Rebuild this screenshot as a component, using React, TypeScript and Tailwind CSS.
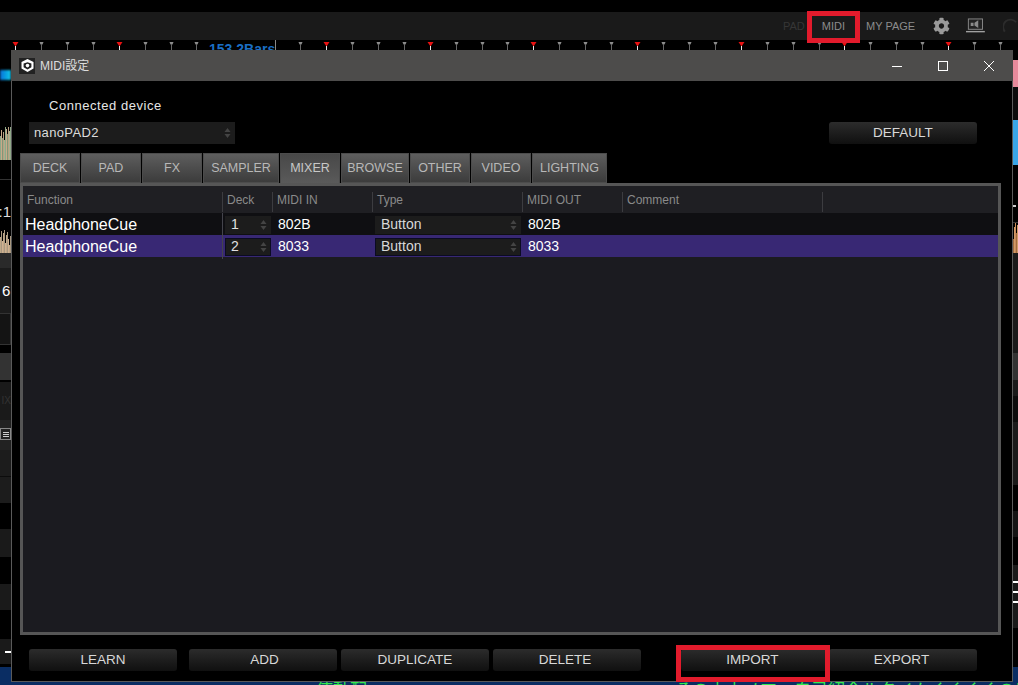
import React from "react";
import { FaCog } from "react-icons/fa";

const markers = Array.from({ length: 40 }, (_, i) => 15 + i * 25.92);

function Arrows({ color = "#444" }: { color?: string }) {
  return (
    <svg width="7" height="12" viewBox="0 0 7 12" className="shrink-0">
      <path d="M3.5 1 L6.5 5 L0.5 5 Z" fill={color} />
      <path d="M3.5 11 L6.5 7 L0.5 7 Z" fill={color} />
    </svg>
  );
}

function Ruler() {
  return (
    <svg width="1018" height="10" viewBox="0 0 1018 10" className="block">
      {markers.map((x, i) => {
        if (i >= 8 && i <= 10) return null;
        const px = Math.round(x) + 0.5;
        const red = i % 4 === 0;
        return red ? (
          <g key={i}>
            <path d={`M${px - 3} 2 L${px + 3} 2 L${px} 6.5 Z`} fill="#e81212" />
            <line x1={px} x2={px} y1="6" y2="10" stroke="#e8e8e8" />
          </g>
        ) : (
          <g key={i}>
            <path d={`M${px - 2} 2 L${px + 2} 2 L${px + 1} 4.5 L${px - 1} 4.5 Z`} fill="#8c8c8c" />
            <line x1={px} x2={px} y1="4" y2="10" stroke="#666" />
          </g>
        );
      })}
    </svg>
  );
}

function Wave({ bars, height, colors }: { bars: number[]; height: number; colors: string[] }) {
  return (
    <svg width={bars.length} height={height} viewBox={`0 0 ${bars.length} ${height}`} className="block">
      {bars.map((b, i) => (
        <rect key={i} x={i} y={height - b} width="1" height={b} fill={colors[i % colors.length]} />
      ))}
    </svg>
  );
}

function Logo() {
  return (
    <div className="w-4 h-4 bg-[#222] flex items-center justify-center shrink-0">
      <svg width="15" height="15" viewBox="0 0 15 15">
        <path d="M7.5 1 L13.5 4 V10.5 L7.5 14 L1.5 10.5 V4 Z" fill="#fff" />
        <path d="M3.6 5.6 L7.5 4.2 L11.4 5.6 V9.2 L7.5 11.6 L3.6 9.2 Z" fill="#222" />
        <circle cx="7.5" cy="7.6" r="1.8" fill="#fff" />
      </svg>
    </div>
  );
}

function DarkButton({ label, className }: { label: string; className: string }) {
  return (
    <div
      className={
        "h-[22px] rounded-[3px] bg-gradient-to-b from-[#2c2c2c] to-[#101010] flex items-center justify-center text-[13.5px] text-[#d8d8d8] " +
        className
      }
    >
      {label}
    </div>
  );
}

const tabs = [
  { label: "DECK", w: "w-[60px]" },
  { label: "PAD", w: "w-[60px]" },
  { label: "FX", w: "w-[60px]" },
  { label: "SAMPLER", w: "w-[76px]" },
  { label: "MIXER", w: "w-[60px]", active: true },
  { label: "BROWSE", w: "w-[68px]" },
  { label: "OTHER", w: "w-[60px]" },
  { label: "VIDEO", w: "w-[60px]" },
  { label: "LIGHTING", w: "w-[75px]" },
];

const rowGrid = "grid grid-cols-[200px_50px_100px_150px_100px_200px_1fr]";

function Header() {
  const cols = ["Function", "Deck", "MIDI IN", "Type", "MIDI OUT", "Comment", ""];
  return (
    <div className={rowGrid + " h-[27px] bg-[#1f1f23] items-end pb-px"}>
      {cols.map((c, i) => (
        <div
          key={i}
          className={
            "h-[20px] flex items-center pl-1 pb-1 text-[12px] text-[#8a8a8a] " +
            (i < 6 ? "border-r border-[#3c3c40]" : "")
          }
        >
          {c}
        </div>
      ))}
    </div>
  );
}

function Row({
  deck,
  code,
  selected,
}: {
  deck: string;
  code: string;
  selected?: boolean;
}) {
  const border = selected ? "border-[#0b0b22]" : "border-[#1c1c1c]";
  return (
    <div className={rowGrid + " h-[22px] items-center " + (selected ? "bg-[#382874]" : "bg-[#0f0f12]")}>
      <div className="h-full flex items-center pl-[2px] text-[16px] text-white border-r border-[#44444c]">
        HeadphoneCue
      </div>
      <div className="pl-[2px]">
        <div className={"h-[18px] w-[46px] bg-[#1c1c1c] border flex items-center justify-between pl-[5px] pr-[3px] pb-px text-[14px] text-[#e0e0e0] " + border}>
          {deck}
          <Arrows />
        </div>
      </div>
      <div className="pl-[5px] pb-px text-[14px] text-white">{code}</div>
      <div className="pl-[2px]">
        <div className={"h-[18px] w-[146px] bg-[#1c1c1c] border flex items-center justify-between pl-[5px] pr-[3px] pb-px text-[14px] text-[#d8d8d8] " + border}>
          Button
          <Arrows />
        </div>
      </div>
      <div className="pl-[5px] pb-px text-[14px] text-white">{code}</div>
      <div />
      <div />
    </div>
  );
}

function Window() {
  return (
    <div className="absolute left-[11px] top-[50px] w-[1002px] h-[632px] bg-black border-x border-b border-[#5a5a5a] flex flex-col font-['Liberation_Sans',sans-serif]">
      <div className="h-[31px] shrink-0 bg-[#4d4c4b] flex items-center pl-2 -mx-px">
        <Logo />
        <span className="ml-[5px] text-[12px] text-[#dddddd] font-['Liberation_Sans','Noto_Sans_CJK_JP',sans-serif]">MIDI設定</span>
        <div className="ml-auto flex items-center">
          <svg width="12" height="12" viewBox="0 0 12 12" className="mr-[34px]">
            <line x1="1" x2="11" y1="6.5" y2="6.5" stroke="#fff" />
          </svg>
          <svg width="12" height="12" viewBox="0 0 12 12" className="mr-[34px]">
            <rect x="1.5" y="1.5" width="9" height="9" fill="none" stroke="#fff" />
          </svg>
          <svg width="12" height="12" viewBox="0 0 12 12" className="mr-[18px]">
            <path d="M1 1 L11 11 M11 1 L1 11" stroke="#fff" />
          </svg>
        </div>
      </div>

      <div className="mt-4 h-4 pl-[37px] pt-px flex items-center text-[13px] tracking-[0.55px] text-[#e6e6e6]">
        Connected device
      </div>

      <div className="mt-[9px] pl-[17px] pr-[35px] flex justify-between">
        <div className="w-[206px] h-[22px] bg-[#1c1c1c] flex items-center justify-between pl-[5px] pr-1 text-[13px] tracking-[0.35px] text-[#dcdcdc]">
          nanoPAD2
          <Arrows />
        </div>
        <DarkButton label="DEFAULT" className="w-[148px]" />
      </div>

      <div className="mt-[9px] ml-2 flex gap-px h-[30px]">
        {tabs.map((t) => (
          <div
            key={t.label}
            className={
              "h-full flex items-center justify-center text-[12.5px] border-t border-x border-[#4c4c4c] " +
              t.w +
              (t.active
                ? " bg-gradient-to-b from-[#484848] to-[#5a5a5a] text-[#c8c8c8]"
                : " bg-gradient-to-b from-[#5e5e5e] to-[#3c3c3c] text-[#b8b8b8] border-b")
            }
          >
            {t.label}
          </div>
        ))}
      </div>

      <div className="ml-2 w-[981px] h-[452px] border-[3px] border-[#565656] bg-[#1b1b20] flex flex-col">
        <Header />
        <Row deck="1" code="802B" />
        <Row deck="2" code="8033" selected />
      </div>

      <div className="mt-[14px] ml-[17px] flex">
        <DarkButton label="LEARN" className="w-[148px]" />
        <DarkButton label="ADD" className="w-[148px] ml-3 pl-[3px]" />
        <DarkButton label="DUPLICATE" className="w-[148px] ml-1" />
        <DarkButton label="DELETE" className="w-[148px] ml-1 pr-1" />
        <DarkButton label="IMPORT" className="w-[148px] ml-10 pr-[5px]" />
        <DarkButton label="EXPORT" className="w-[148px] pr-[3px]" />
      </div>
    </div>
  );
}

function LeftStrip() {
  return (
    <div className="w-[11px] flex flex-col overflow-hidden text-white text-[16px] leading-none">
      <div className="h-5" />
      <div className="h-[10px] bg-gradient-to-r from-[#1070d8] to-[#18c8e8] blur-[1px]" />
      <div className="h-[47px]" />
      <Wave
        height={33}
        bars={[24, 30, 22, 28, 20, 33, 31, 26, 33, 29, 33]}
        colors={["#8fa888", "#c9a98a", "#7f9878", "#b8a080", "#a8b090"]}
      />
      <div className="h-5 border-b border-[#333]" />
      <div className="h-[24px]" />
      <div className="h-4 flex justify-end text-[15px] text-[#ddd]">:1</div>
      <div className="h-[10px]" />
      <Wave
        height={23}
        bars={[16, 22, 12, 20, 23, 10, 18, 21, 14, 8, 17]}
        colors={["#c0a888", "#a89880", "#d0b090"]}
      />
      <div className="h-[15px] bg-[#2a2a2a]" />
      <div className="h-[45px] bg-[#1c1c1c] flex items-center pl-[2px] text-[15px]">6</div>
      <div className="h-[32px] bg-[#141414] border-y border-r border-[#333]" />
      <div className="h-2" />
      <div className="h-[27px] bg-[#333]" />
      <div className="h-[2px]" />
      <div className="h-[38px] bg-[#1a1a1a] flex items-center justify-end text-[10px] text-[#333]">IX</div>
      <div className="h-[30px] bg-[#222] pt-2">
        <div className="h-3 w-[11px] border border-[#888] flex flex-col justify-center gap-px pl-[2px]">
          <div className="h-px w-[6px] bg-[#ccc]" />
          <div className="h-px w-[6px] bg-[#ccc]" />
          <div className="h-px w-[6px] bg-[#ccc]" />
        </div>
      </div>
      <div className="h-[27px] bg-[#1c1c1c] border-b border-[#0c0c0c]" />
      <div className="h-[26px] bg-[#1c1c1c]" />
      <div className="h-[26px]" />
      <div className="h-[28px] bg-[#1a1a1a]" />
      <div className="h-[27px]" />
      <div className="h-[26px] bg-[#1a1a1a]" />
      <div className="h-[29px]" />
      <div className="h-[25px] bg-[#1a1a1a] flex items-center justify-end">
        <div className="h-[2px] w-[6px] bg-white" />
      </div>
    </div>
  );
}

function RightStrip() {
  return (
    <div className="w-[5px] flex flex-col overflow-hidden">
      <div className="h-[10px]" />
      <div className="h-[27px] bg-[#e88a9c] blur-[0.5px]" />
      <div className="h-[33px] bg-[#0c0c0c]" />
      <div className="h-[45px] bg-[#3aa6e8]" />
      <div className="h-[58px] border-b border-[#333] pt-[40px]">
        <div className="h-[2px] w-[3px] bg-[#ccc]" />
      </div>
      <Wave height={30} bars={[14, 26, 30, 20, 28]} colors={["#a06a40", "#d09a68", "#c88a58"]} />
      <div className="h-[100px] bg-[#1a1a1a]" />
      <div className="h-[27px] bg-[#333]" />
      <div className="h-[16px] bg-[#1a1a1a]" />
      <div className="h-[26px] bg-[#0c0c0c]" />
      <div className="h-[63px] bg-[#1a1a1a]" />
      <div className="h-[26px]" />
      <div className="h-[26px] bg-[#141414]" />
      <div className="h-[28px]" />
      <div className="h-[63px] bg-[#1a1a1a] flex flex-col gap-2 pt-4">
        <div className="h-[2px] bg-white" />
        <div className="h-[2px] bg-white" />
        <div className="h-[2px] bg-white" />
      </div>
    </div>
  );
}

export default function App() {
  return (
    <div className="relative w-[1018px] h-[685px] overflow-hidden bg-black font-['Liberation_Sans',sans-serif] flex flex-col">
      <div className="h-3 shrink-0 bg-black" />
      <div className="h-7 shrink-0 bg-[#1a1a1a] flex items-center text-[11px] whitespace-nowrap">
        <span className="ml-[783px] text-[#363636]">PAD</span>
        <span className="ml-[17px] text-[#8c8c8c]">MIDI</span>
        <span className="ml-[21px] text-[#8c8c8c]">MY PAGE</span>
        <FaCog className="ml-[18px] text-[#9a9a9a] text-[18px]" />
        <svg width="20" height="16" viewBox="0 0 20 16" className="ml-[16px]">
          <rect x="2.5" y="0.5" width="15" height="11" fill="#222" stroke="#8a8a8a" />
          <path d="M0 14 H20" stroke="#a0a0a0" strokeWidth="1.5" />
          <path d="M5 4.5 H8 V8 H5 Z M9 4.5 L13 2 V10 L9 7.5 Z" fill="#8a8a8a" />
        </svg>
        <svg width="16" height="16" viewBox="0 0 16 16" className="ml-[18px]">
          <path d="M2 14 A7 7 0 0 1 14 4" fill="none" stroke="#2c2c2c" strokeWidth="2" />
        </svg>
      </div>
      <div className="h-[10px] shrink-0 relative">
        <Ruler />
        <span className="absolute left-[209px] top-px text-[14px] leading-4 font-bold text-[#1a6ec4]">153.2Bars</span>
        <div className="absolute left-[275px] top-0 w-px h-[10px] bg-[#888]" />
      </div>
      <div className="h-[617px] shrink-0 flex justify-between">
        <LeftStrip />
        <RightStrip />
      </div>
      <div className="h-[18px] shrink-0 bg-[#0a2d63] flex pt-3 pl-[316px] text-[17px] leading-5 text-[#35e84e] font-['Noto_Sans_CJK_JP',sans-serif] whitespace-nowrap">
        <span>使動配</span>
        <span className="ml-[308px]">その山山ノマー自己紹介ルタイムくくくくの川</span>
      </div>

      <Window />

      <div className="absolute left-[807px] top-[11px] w-[53px] h-[32px] border-[5px] border-[#e21b2c]" />
      <div className="absolute left-[676px] top-[645px] w-[154px] h-[37px] border-[5px] border-[#e21b2c]" />
    </div>
  );
}
